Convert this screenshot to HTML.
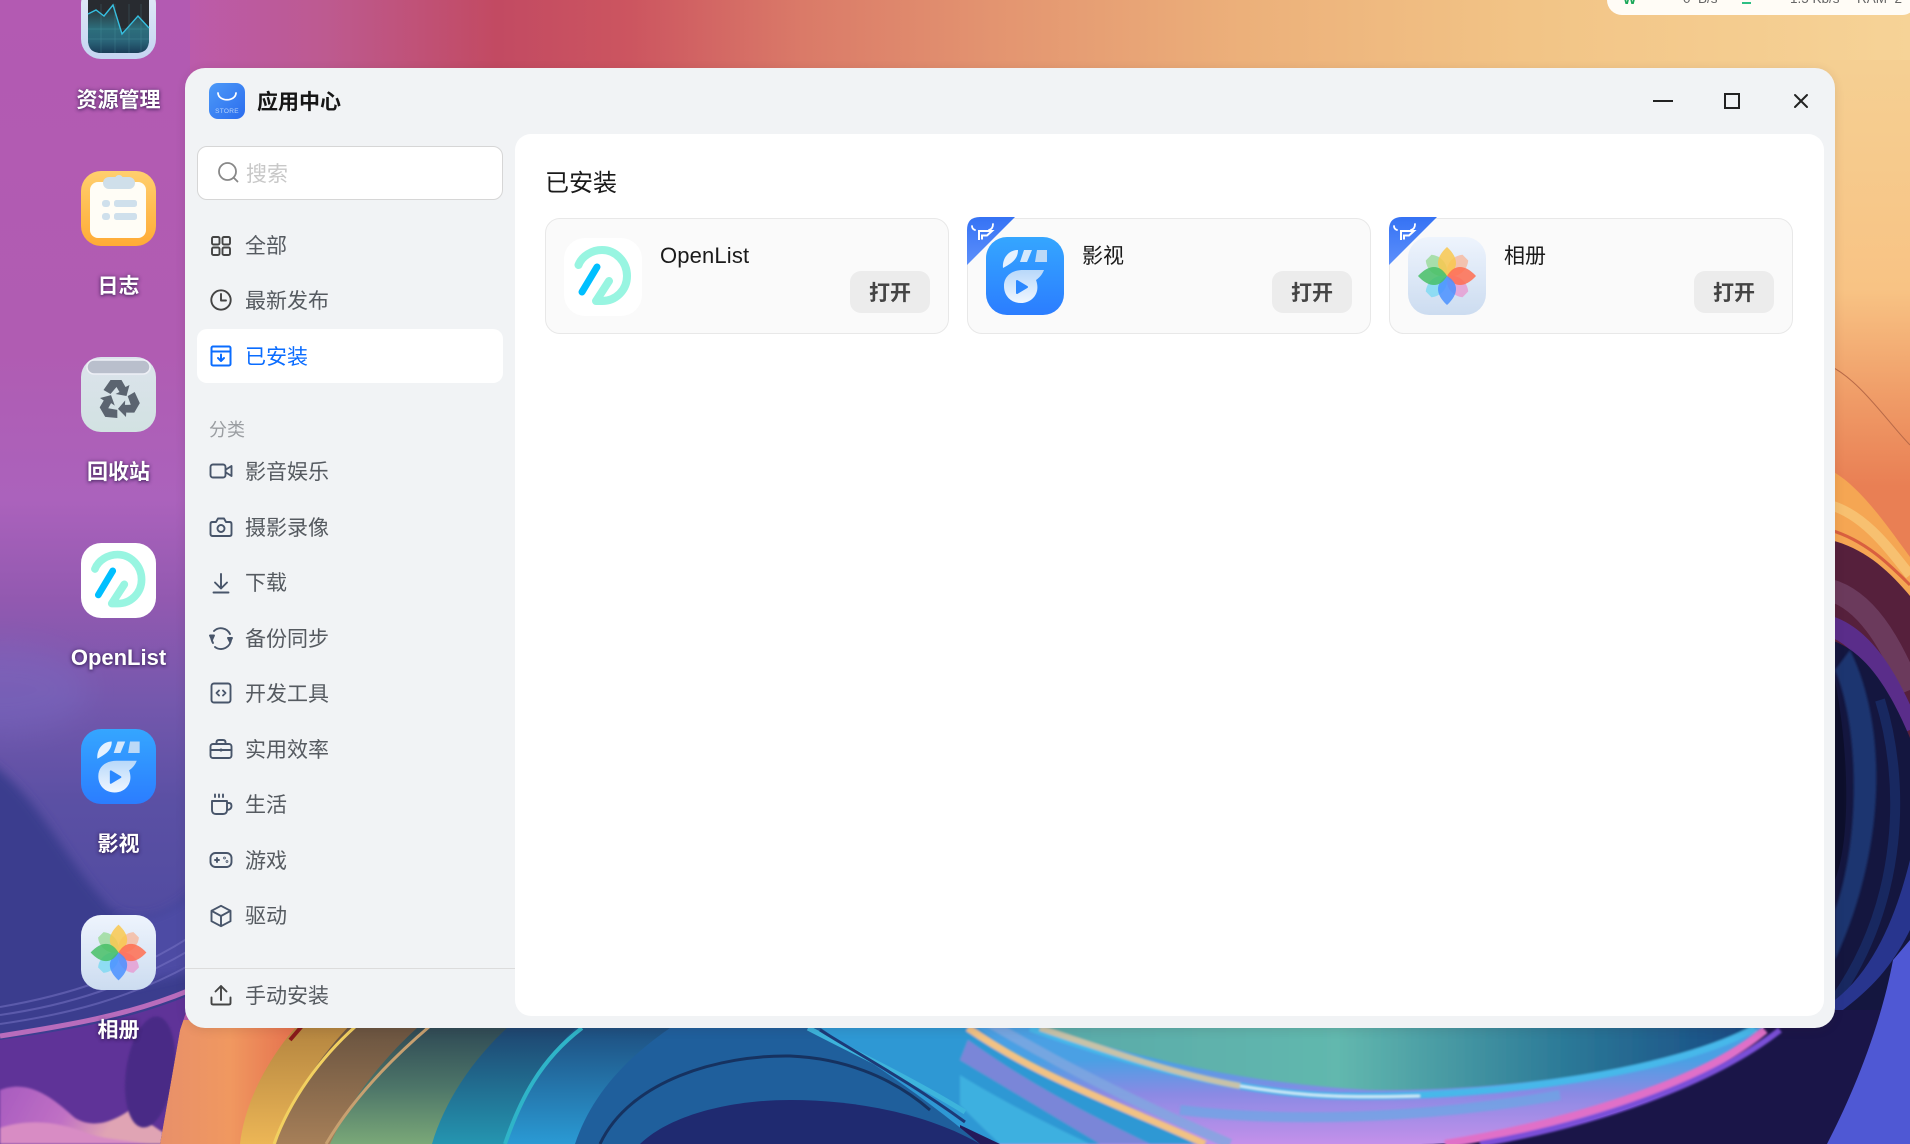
<!DOCTYPE html>
<html lang="zh">
<head>
<meta charset="utf-8">
<title>应用中心</title>
<style>
html,body{margin:0;padding:0;width:1910px;height:1144px;overflow:hidden;background:#1e1f60}
body{position:relative;font-family:"Liberation Sans","Noto Sans CJK SC",sans-serif}
.abs,.m,.lbl,.ic,.card,.btn,.name{position:absolute}
svg{display:block;overflow:visible}
.lbl{left:18px;width:201px;text-align:center;font-size:21px;font-weight:700;color:#fff;height:30px;line-height:30px;text-shadow:0 1px 3px rgba(40,20,70,.75),0 0 5px rgba(40,20,70,.35);white-space:nowrap}
.ic{left:81px;width:75px;height:75px}
#win{position:absolute;left:185px;top:68px;width:1650px;height:960px;background:#f1f3f5;border-radius:20px;box-shadow:0 2px 10px rgba(60,30,30,.12)}
#panel{position:absolute;left:515px;top:134px;width:1309px;height:882px;background:#fff;border-radius:16px}
.m{left:245px;height:30px;line-height:30px;font-size:21px;color:#555a60;white-space:nowrap}
.si{position:absolute;left:209px;width:24px;height:24px}
.si *{fill:none;stroke:#48556a;stroke-width:1.9;stroke-linecap:round;stroke-linejoin:round}
.card{top:218px;width:404px;height:116px;box-sizing:border-box;background:#fafafa;border:1px solid #e8e8e8;border-radius:15px}
.name{height:30px;line-height:30px;top:242px;font-size:21px;color:#1a1a1a;white-space:nowrap}
.btn{top:271px;width:80px;height:42px;border-radius:11px;background:#ececec;color:#444;font-weight:700;font-size:21px;line-height:45px;text-align:center}
.st{position:absolute;font-size:13.5px;line-height:16px;color:#666;white-space:nowrap}
</style>
</head>
<body>
<!-- wallpaper -->
<svg class="abs" style="left:0;top:0" width="1910" height="1144" viewBox="0 0 1910 1144">
<defs>
<linearGradient id="top" gradientUnits="userSpaceOnUse" x1="0" y1="0" x2="1910" y2="0">
<stop offset="0" stop-color="#b25ab2"/><stop offset=".09" stop-color="#bb5bae"/><stop offset=".17" stop-color="#bd5a90"/><stop offset=".26" stop-color="#c24a62"/><stop offset=".33" stop-color="#cc5560"/><stop offset=".42" stop-color="#da7a68"/><stop offset=".52" stop-color="#e39470"/><stop offset=".65" stop-color="#ecb07a"/><stop offset=".8" stop-color="#f2c486"/><stop offset="1" stop-color="#f6d397"/>
</linearGradient>
<linearGradient id="leftc" gradientUnits="userSpaceOnUse" x1="0" y1="0" x2="0" y2="1000">
<stop offset="0" stop-color="#b35ab2"/><stop offset=".35" stop-color="#b05cb2"/><stop offset=".5" stop-color="#ab62bc"/><stop offset=".6" stop-color="#9259b0"/><stop offset=".7" stop-color="#7558ad"/><stop offset=".8" stop-color="#5b50a4"/><stop offset="1" stop-color="#4a489e"/>
</linearGradient>
<linearGradient id="rstrip" gradientUnits="userSpaceOnUse" x1="0" y1="68" x2="0" y2="560">
<stop offset="0" stop-color="#f5cf92"/><stop offset=".45" stop-color="#f8c384"/><stop offset=".68" stop-color="#ef9a66"/><stop offset=".85" stop-color="#e97f54"/><stop offset="1" stop-color="#e97f54"/>
</linearGradient>
<linearGradient id="gLow" gradientUnits="userSpaceOnUse" x1="0" y1="1028" x2="0" y2="1144">
<stop offset="0" stop-color="#2f4a55"/><stop offset=".5" stop-color="#4c7468"/><stop offset="1" stop-color="#7aa878"/>
</linearGradient>
<linearGradient id="tan" gradientUnits="userSpaceOnUse" x1="0" y1="1028" x2="0" y2="1144">
<stop offset="0" stop-color="#6a5440"/><stop offset="1" stop-color="#a67f58"/>
</linearGradient>
<linearGradient id="gold" gradientUnits="userSpaceOnUse" x1="0" y1="1028" x2="0" y2="1144">
<stop offset="0" stop-color="#b48540"/><stop offset="1" stop-color="#ecb656"/>
</linearGradient>
<linearGradient id="blueB" gradientUnits="userSpaceOnUse" x1="0" y1="1028" x2="0" y2="1144">
<stop offset="0" stop-color="#1e4f80"/><stop offset="1" stop-color="#2a9ad4"/>
</linearGradient>
<linearGradient id="tealB" gradientUnits="userSpaceOnUse" x1="0" y1="1028" x2="0" y2="1144">
<stop offset="0" stop-color="#1e4570"/><stop offset="1" stop-color="#2495b0"/>
</linearGradient>
<linearGradient id="midT" gradientUnits="userSpaceOnUse" x1="1000" y1="0" x2="1750" y2="0">
<stop offset="0" stop-color="#58a8a8"/><stop offset=".45" stop-color="#62b8ae"/><stop offset=".75" stop-color="#2c7a98"/><stop offset="1" stop-color="#184a84"/>
</linearGradient>
<linearGradient id="lav" gradientUnits="userSpaceOnUse" x1="0" y1="1060" x2="0" y2="1144">
<stop offset="0" stop-color="#4aa0e4"/><stop offset=".4" stop-color="#8a8ae4"/><stop offset="1" stop-color="#c490ea"/>
</linearGradient>
<linearGradient id="ora" gradientUnits="userSpaceOnUse" x1="160" y1="0" x2="300" y2="0">
<stop offset="0" stop-color="#e8906a"/><stop offset=".5" stop-color="#f09860"/><stop offset="1" stop-color="#e56f4d"/>
</linearGradient>
<linearGradient id="pinkb" gradientUnits="userSpaceOnUse" x1="0" y1="1090" x2="100" y2="1144">
<stop offset="0" stop-color="#a85cc0"/><stop offset=".6" stop-color="#c070c4"/><stop offset="1" stop-color="#e0a4b4"/>
</linearGradient>
<filter id="b15" x="-50%" y="-50%" width="200%" height="200%"><feGaussianBlur stdDeviation="15"/></filter>
<filter id="b5" x="-20%" y="-20%" width="140%" height="140%"><feGaussianBlur stdDeviation="5"/></filter>
<filter id="b1" x="-20%" y="-20%" width="140%" height="140%"><feGaussianBlur stdDeviation="1"/></filter>
<clipPath id="lclip"><path d="M0,0 H190 V1000 L180,1030 L160,1144 H0Z"/></clipPath>
</defs>
<rect width="1910" height="1144" fill="url(#top)"/>

<!-- bottom band, painted right to left -->
<rect x="400" y="1020" width="1510" height="124" fill="#1a1548"/>
<path d="M960,1020 L1770,1020 C1720,1090 1560,1144 1420,1144 L960,1144Z" fill="url(#lav)"/>
<g filter="url(#b1)">
<path d="M1445,1144 C1560,1125 1700,1085 1765,1030" fill="none" stroke="#e070c8" stroke-width="8"/>
<path d="M1480,1144 C1590,1125 1710,1085 1780,1030" fill="none" stroke="#7a50d8" stroke-width="6"/>
<path d="M1010,1020 L1770,1020 C1690,1065 1520,1092 1370,1090 C1220,1082 1120,1050 1010,1020Z" fill="url(#midT)"/>
<path d="M1030,1028 C1120,1060 1240,1096 1350,1096 C1500,1098 1680,1070 1755,1028" fill="none" stroke="#46b8ea" stroke-width="7"/>
<path d="M1040,1028 C1120,1055 1180,1075 1240,1086" fill="none" stroke="#c8c2a8" stroke-width="6"/>
<path d="M1240,1086 C1300,1096 1340,1098 1420,1096" fill="none" stroke="#d8eef8" stroke-width="2.5"/>
<path d="M1180,1110 C1280,1122 1420,1120 1560,1095" fill="none" stroke="#6aa8e4" stroke-width="10" opacity=".7"/>
<!-- left of orange band -->
<path d="M780,1020 L968,1020 C1040,1078 1120,1105 1208,1144 L780,1144Z" fill="#2f98d4"/>
<path d="M968,1040 C1030,1085 1090,1115 1150,1144 L1100,1144 C1060,1120 1010,1090 960,1060Z" fill="#7a86d8"/>
<path d="M960,1075 C1000,1100 1050,1125 1090,1144 L1000,1144 C985,1130 970,1115 960,1105Z" fill="#3cb0e0"/>
<path d="M968,1028 C1040,1078 1120,1105 1205,1144" fill="none" stroke="#f2c284" stroke-width="7"/>
<path d="M985,1020 C1060,1065 1130,1100 1230,1144" fill="none" stroke="#7fa8e0" stroke-width="10" opacity=".8"/>
</g>
<path d="M960,1125 L1000,1144 L960,1144Z" fill="#241a5a"/>
<path d="M500,1020 L810,1020 C850,1050 910,1085 980,1144 L500,1144Z" fill="#1f5f9c"/>
<path d="M808,1028 C850,1050 910,1078 965,1112" fill="none" stroke="#3db4dc" stroke-width="5"/>
<path d="M820,1030 C860,1055 910,1082 965,1122" fill="none" stroke="#1c3a78" stroke-width="3"/>
<path d="M640,1144 C670,1115 730,1100 790,1100 C860,1100 930,1115 980,1144Z" fill="#1f2a70"/>
<path d="M600,1144 C630,1080 720,1055 790,1056 C840,1058 890,1075 930,1110" fill="none" stroke="#163260" stroke-width="3"/>
<path d="M0,1020 L682,1020 C620,1060 590,1100 575,1144 L0,1144Z" fill="url(#blueB)"/>
<path d="M0,1020 L584,1020 C540,1060 520,1100 507,1144 L0,1144Z" fill="url(#tealB)"/>
<path d="M582,1028 C540,1060 520,1100 505,1144" fill="none" stroke="#2fb4c8" stroke-width="4"/>
<path d="M0,1020 L516,1020 C475,1055 445,1100 432,1144 L0,1144Z" fill="url(#gLow)"/>
<path d="M0,1020 L426,1020 C385,1055 350,1100 330,1144 L0,1144Z" fill="url(#tan)"/>
<path d="M430,1026 C390,1060 352,1100 326,1144" fill="none" stroke="#c8a070" stroke-width="3"/>
<path d="M0,1020 L355,1020 C320,1055 290,1100 276,1144 L0,1144Z" fill="url(#gold)"/>
<path d="M356,1026 C320,1058 290,1100 274,1144" fill="none" stroke="#f2d060" stroke-width="3"/>
<path d="M150,1020 L302,1020 C270,1055 245,1100 240,1144 L150,1144Z" fill="url(#ora)"/>
<path d="M302,1026 L290,1040" fill="none" stroke="#8a1a1a" stroke-width="4"/>

<!-- left column -->
<g clip-path="url(#lclip)">
<rect x="0" y="0" width="190" height="1144" fill="url(#leftc)"/>
<ellipse cx="0" cy="690" rx="90" ry="45" fill="#7a72cc" opacity=".3" filter="url(#b15)"/>
<path d="M-20,755 C40,795 60,855 112,910 C140,925 170,920 200,885 L200,1010 L-20,1050Z" fill="#3b3c8e" filter="url(#b5)"/>
<path d="M118,915 C140,922 170,915 200,885 L200,970 L130,985Z" fill="#4d4ba4" filter="url(#b5)"/>
<path d="M0,1040 C70,1030 130,1020 190,995 L190,1144 L0,1144Z" fill="#5f3398"/>
<path d="M0,1007 C70,995 130,975 190,937 M0,1015 C70,1005 130,985 190,950 M0,1024 C70,1014 130,998 190,965" fill="none" stroke="#7c78c8" stroke-width="2" opacity=".5"/>
<path d="M0,1036 C70,1025 130,1015 190,990" fill="none" stroke="#b86cbc" stroke-width="5"/>
<g filter="url(#b1)">
<path d="M0,1090 C30,1078 55,1100 75,1118 C95,1130 115,1120 130,1110 L180,1144 L0,1144Z" fill="url(#pinkb)"/>
<path d="M0,1128 C30,1118 60,1122 90,1134 C100,1138 130,1141 150,1144 L0,1144Z" fill="#d88cc4"/>
</g>
<ellipse cx="150" cy="1072" rx="24" ry="56" fill="#4a2a86" transform="rotate(8 150 1072)" filter="url(#b1)"/>
</g>

<!-- right strip -->
<rect x="1830" y="60" width="80" height="560" fill="url(#rstrip)"/>
<path d="M1830,366 C1860,380 1890,425 1910,445" fill="none" stroke="#b86a48" stroke-width="1"/>
<path d="M1830,470 C1860,485 1890,530 1910,557 L1910,740 L1830,740Z" fill="#f5a653"/>
<path d="M1830,505 C1865,515 1890,550 1910,575" fill="none" stroke="#f7c070" stroke-width="10"/>
<path d="M1830,530 C1865,540 1890,565 1910,585" fill="none" stroke="#d9603f" stroke-width="3"/>
<path d="M1830,540 C1865,548 1890,572 1910,596 L1910,780 L1830,780Z" fill="#56203c"/>
<path d="M1830,590 C1865,600 1890,640 1910,690" fill="none" stroke="#6b3a5c" stroke-width="22"/>
<path d="M1830,626 C1865,638 1890,680 1910,730" fill="none" stroke="#5a2d8a" stroke-width="20"/>
<path d="M1830,640 C1865,650 1890,690 1910,738 L1910,1144 L1830,1144Z" fill="#14163f"/>
<path d="M1850,650 C1885,720 1890,840 1835,960 L1835,910 C1860,840 1860,730 1835,670Z" fill="#1b3570" filter="url(#b1)"/>
<path d="M1835,680 C1850,760 1850,840 1835,880Z" fill="#0d0f2c"/>
<path d="M1880,700 C1905,780 1905,900 1835,1000" fill="none" stroke="#182860" stroke-width="10"/>
<path d="M1835,1000 C1880,965 1900,900 1910,860 L1910,930 C1890,970 1870,990 1835,1016Z" fill="#28358e"/>
<rect x="1830" y="1010" width="80" height="134" fill="#1a1548"/>
<path d="M1893,960 L1910,940 L1910,1144 L1827,1144 C1850,1100 1880,1030 1893,960Z" fill="#4f58d4"/>
</svg>

<!-- status pill -->
<div class="abs" style="left:1607px;top:-20px;width:310px;height:35px;background:#fffcf6;border-radius:15px;overflow:hidden">
 <div class="st" style="left:16px;top:11px;color:#1aa85a;font-weight:700;font-size:14px">W</div>
 <div class="st" style="left:76px;top:11px">0&nbsp; B/s</div>
 <div class="abs" style="left:135px;top:22px;width:9px;height:2px;background:#2dbf84"></div>
 <div class="st" style="left:183px;top:11px">1.5 Kb/s</div>
 <div class="st" style="left:250px;top:11px">RAM&nbsp; 2</div>
</div>

<!-- desktop icons -->
<svg class="ic" style="top:-16px" viewBox="0 0 75 75">
<defs><linearGradient id="scr" x1="0" y1="0" x2="0" y2="1"><stop offset="0" stop-color="#2a2c30"/><stop offset=".5" stop-color="#2c6e7c"/><stop offset=".75" stop-color="#2a6478"/><stop offset="1" stop-color="#1a3d58"/></linearGradient>
<linearGradient id="frm" x1="0" y1="0" x2="0" y2="1"><stop offset="0" stop-color="#e4ecf7"/><stop offset="1" stop-color="#c5d4f2"/></linearGradient></defs>
<rect width="75" height="75" rx="20" fill="url(#frm)"/>
<rect x="7" y="0" width="61" height="69" rx="13" fill="#282b30"/>
<path d="M7,30 L15,26 L23,32 L32,21 L41,50 L57,32 L68,44 L68,56 Q68,69 55,69 L20,69 Q7,69 7,56Z" fill="url(#scr)"/>
<path d="M7,30 L15,26 L23,32 L32,21 L41,50 L57,32 L68,44" fill="none" stroke="#36bfe0" stroke-width="1.4"/>
<path d="M7,45 H68 M7,55 H68 M20,20 V69 M34,20 V69 M48,20 V69 M60,20 V69" stroke="#60b0b8" stroke-width=".5" opacity=".4"/>
</svg>
<div class="lbl" style="top:86px">资源管理</div>

<svg class="ic" style="top:171px" viewBox="0 0 75 75">
<defs><linearGradient id="nt" x1="0" y1="0" x2="0" y2="1"><stop offset="0" stop-color="#ffcf6e"/><stop offset="1" stop-color="#ffab35"/></linearGradient></defs>
<rect width="75" height="75" rx="20" fill="url(#nt)"/>
<rect x="9" y="11" width="56" height="56" rx="8" fill="#fffdf6"/>
<rect x="22" y="6" width="32" height="12" rx="6" fill="#cfdfea"/><circle cx="38" cy="8" r="4" fill="#cfdfea"/>
<rect x="21" y="29" width="8" height="7" rx="3" fill="#cfe0ec"/><rect x="33" y="29" width="23" height="7" rx="2.5" fill="#cfe0ec"/>
<rect x="21" y="42" width="8" height="7" rx="3" fill="#cfe0ec"/><rect x="33" y="42" width="23" height="7" rx="2.5" fill="#cfe0ec"/>
</svg>
<div class="lbl" style="top:272px">日志</div>

<svg class="ic" style="top:357px" viewBox="0 0 75 75">
<defs><linearGradient id="bin" x1="0" y1="0" x2="0" y2="1"><stop offset="0" stop-color="#dce3ec"/><stop offset="1" stop-color="#d2e2e2"/></linearGradient></defs>
<rect width="75" height="75" rx="20" fill="url(#bin)"/>
<rect x="6" y="3" width="63" height="14" rx="7" fill="#b9bfcc" stroke="#eef0f6" stroke-width="1.5"/>
<g fill="#5b6470" transform="translate(37.5,43)">
<path d="M-8,-6 L-15,-10 L-8,-20 L3,-20 L7,-13 L11,-15 L8,-4 L-3,-6 L1,-8 L-2,-13 Z"/>
<path d="M-8,-6 L-15,-10 L-8,-20 L3,-20 L7,-13 L11,-15 L8,-4 L-3,-6 L1,-8 L-2,-13 Z" transform="rotate(120)"/>
<path d="M-8,-6 L-15,-10 L-8,-20 L3,-20 L7,-13 L11,-15 L8,-4 L-3,-6 L1,-8 L-2,-13 Z" transform="rotate(240)"/>
</g>
</svg>
<div class="lbl" style="top:458px">回收站</div>

<svg class="ic" style="top:543px" viewBox="0 0 78 78"><rect width="78" height="78" rx="21" fill="#fff"/>
<path d="M14.5,27 C18,18 28,12 38,12 C52,12 63,24 63,38 C63,52 52,63 38,63 L32,63 L45,43" fill="none" stroke="#98f5e1" stroke-width="8" stroke-linecap="round" stroke-linejoin="round"/>
<path d="M33,29 L18,54" fill="none" stroke="#00bfff" stroke-width="7" stroke-linecap="round"/></svg>
<div class="lbl" style="top:643px;font-size:22px">OpenList</div>

<svg class="ic" style="top:729px" viewBox="0 0 78 78">
<defs><linearGradient id="vb" x1="0" y1="0" x2="0" y2="1"><stop offset="0" stop-color="#35a6ff"/><stop offset="1" stop-color="#2b7dff"/></linearGradient>
<linearGradient id="vw" x1="0" y1="0" x2="0" y2="1"><stop offset="0" stop-color="#b8d8fa"/><stop offset="1" stop-color="#f0f7ff"/></linearGradient></defs>
<rect width="78" height="78" rx="21" fill="url(#vb)"/>
<path d="M17,31 C16,22 22,13 32,13 C32,22 26,26 17,31Z" fill="#e6f2ff"/><path d="M38,13 L46,13 L41,25 L34,25Z" fill="#d4e8fc"/><path d="M51,13 L61,13 L61,25 L49,25Z" fill="#bcd9f7"/>
<path d="M18,49 C18,39 26,33 37,33 L58,33 C56,38 53,41 50,43 C55,56 46,66 35,66 C25,66 18,59 18,49Z" fill="url(#vw)"/><path d="M31,44 L41,50 L31,56Z" fill="#2b88ff" stroke="#2b88ff" stroke-width="2" stroke-linejoin="round"/></svg>
<div class="lbl" style="top:830px">影视</div>

<svg class="ic" style="top:915px" viewBox="0 0 78 78">
<defs><linearGradient id="fb" x1="0" y1="0" x2="0" y2="1"><stop offset="0" stop-color="#eef4fd"/><stop offset="1" stop-color="#ccdcf0"/></linearGradient></defs>
<rect width="78" height="78" rx="21" fill="url(#fb)"/>
<g transform="translate(39,39)">
<g fill-opacity=".7"><path d="M0,0 C-10,-7 -10,-19 -4,-26 L4,-26 C10,-19 10,-7 0,0Z" fill="#8fd88a" transform="rotate(-45)"/><path d="M0,0 C-10,-7 -10,-19 -4,-26 L4,-26 C10,-19 10,-7 0,0Z" fill="#f9b090" transform="rotate(45)"/><path d="M0,0 C-10,-7 -10,-19 -4,-26 L4,-26 C10,-19 10,-7 0,0Z" fill="#ea90cc" transform="rotate(135)"/><path d="M0,0 C-10,-7 -10,-19 -4,-26 L4,-26 C10,-19 10,-7 0,0Z" fill="#6fd8f2" transform="rotate(225)"/></g>
<g fill-opacity=".85"><path d="M0,0 C-12,-7 -12,-18 0,-29 C12,-18 12,-7 0,0Z" fill="#f9c84f"/><path d="M0,0 C-12,-7 -12,-18 0,-29 C12,-18 12,-7 0,0Z" fill="#ff6d50" transform="rotate(90)"/><path d="M0,0 C-12,-7 -12,-18 0,-29 C12,-18 12,-7 0,0Z" fill="#4a90ff" transform="rotate(180)"/><path d="M0,0 C-12,-7 -12,-18 0,-29 C12,-18 12,-7 0,0Z" fill="#48c066" transform="rotate(270)"/></g>
</g></svg>
<div class="lbl" style="top:1016px">相册</div>

<!-- window -->
<div id="win"></div>
<div id="panel"></div>

<svg class="abs" style="left:209px;top:83px" width="36" height="36" viewBox="0 0 36 36">
<defs><linearGradient id="st" x1="0" y1="0" x2="1" y2="1"><stop offset="0" stop-color="#4d9af8"/><stop offset="1" stop-color="#2b6cee"/></linearGradient></defs>
<rect width="36" height="36" rx="9" fill="url(#st)"/>
<path d="M9,10 C9.5,19 26.5,19 27,10" fill="none" stroke="#fff" stroke-width="1.8" stroke-linecap="round"/>
<text x="18" y="30" text-anchor="middle" font-size="6.5" fill="#b8d4fb" font-family="Liberation Sans" letter-spacing=".3">STORE</text>
</svg>
<div class="abs" style="left:257px;top:87px;height:32px;line-height:32px;font-size:21px;font-weight:700;color:#161616;white-space:nowrap">应用中心</div>

<svg class="abs" style="left:1640px;top:80px" width="190" height="40" viewBox="0 0 190 40">
<path d="M13,21 H33" stroke="#222" stroke-width="2"/>
<rect x="85" y="14" width="14" height="14" fill="none" stroke="#222" stroke-width="2"/>
<path d="M155,15 L167,27 M167,15 L155,27" stroke="#222" stroke-width="2" stroke-linecap="round"/>
</svg>

<!-- search -->
<div class="abs" style="left:197px;top:146px;width:306px;height:54px;box-sizing:border-box;background:#fff;border:1px solid #d6d6d6;border-radius:10px"></div>
<svg class="abs" style="left:216px;top:160px" width="24" height="24" viewBox="0 0 24 24"><circle cx="11.5" cy="11.5" r="8.5" fill="none" stroke="#888" stroke-width="1.8"/><path d="M18,18 L21.5,21.5" stroke="#888" stroke-width="1.8" stroke-linecap="round"/></svg>
<div class="m" style="left:246px;top:160px;color:#c8c8c8">搜索</div>

<!-- active item -->
<div class="abs" style="left:197px;top:329px;width:306px;height:54px;background:#fff;border-radius:10px"></div>

<svg class="si" style="top:234px" viewBox="0 0 24 24"><rect x="3" y="3" width="7.5" height="7.5" rx="1.5" style="stroke:#444"/><rect x="13.5" y="3" width="7.5" height="7.5" rx="1.5" style="stroke:#444"/><rect x="3" y="13.5" width="7.5" height="7.5" rx="1.5" style="stroke:#444"/><rect x="13.5" y="13.5" width="7.5" height="7.5" rx="1.5" style="stroke:#444"/></svg>
<div class="m" style="top:232px">全部</div>
<svg class="si" style="top:288px" viewBox="0 0 24 24"><circle cx="12" cy="12" r="9.7" style="stroke:#444"/><path d="M12,6 V12.5 H17" style="stroke:#444"/></svg>
<div class="m" style="top:287px">最新发布</div>
<svg class="si" style="top:344px" viewBox="0 0 24 24"><rect x="2.5" y="2.5" width="19" height="19" rx="1.5" style="stroke:#0a6cff;stroke-width:2"/><path d="M2.5,7.5 H21.5" style="stroke:#0a6cff;stroke-width:2"/><path d="M12,10.5 V16.5 M9,14 L12,17 L15,14" style="stroke:#0a6cff;stroke-width:2"/></svg>
<div class="m" style="top:343px;color:#0a6cff">已安装</div>

<div class="m" style="left:209px;top:415px;font-size:18px;color:#9a9da1">分类</div>

<svg class="si" style="top:459px" viewBox="0 0 24 24"><rect x="1.5" y="5.5" width="15" height="13" rx="2.5"/><path d="M17,10.5 L22.5,7 V17 L17,13.5"/></svg>
<div class="m" style="top:458px">影音娱乐</div>
<svg class="si" style="top:515px" viewBox="0 0 24 24"><path d="M3.5,7 H7 L9,3.5 H15 L17,7 H20.5 Q22.5,7 22.5,9 V19 Q22.5,21 20.5,21 H3.5 Q1.5,21 1.5,19 V9 Q1.5,7 3.5,7Z"/><circle cx="12" cy="13.5" r="3.5"/></svg>
<div class="m" style="top:514px">摄影录像</div>
<svg class="si" style="top:571px" viewBox="0 0 24 24"><path d="M12,3 V17 M6,11.5 L12,17.5 L18,11.5 M4.5,21.5 H19.5"/></svg>
<div class="m" style="top:569px">下载</div>
<svg class="si" style="top:626px" viewBox="0 0 24 24"><path d="M5,5 A10,10 0 0 1 21,8 M22,13 A10,10 0 0 1 6,21 M2.5,11 A10,10 0 0 0 4,17"/><path d="M1,9.5 L5,9.5 L3,14Z M19,12 L23,12 L21,16Z" style="fill:#48556a"/></svg>
<div class="m" style="top:625px">备份同步</div>
<svg class="si" style="top:681px" viewBox="0 0 24 24"><rect x="2.5" y="2.5" width="19" height="19" rx="2.5"/><path d="M10,9.5 L7.5,12 L10,14.5 M14,9.5 L16.5,12 L14,14.5"/></svg>
<div class="m" style="top:680px">开发工具</div>
<svg class="si" style="top:737px" viewBox="0 0 24 24"><rect x="1.5" y="7" width="21" height="14" rx="2.5"/><path d="M7.5,7 V5.5 Q7.5,3 10,3 H14 Q16.5,3 16.5,5.5 V7 M1.5,13 H22.5"/><circle cx="12" cy="13" r=".6"/></svg>
<div class="m" style="top:736px">实用效率</div>
<svg class="si" style="top:792px" viewBox="0 0 24 24"><path d="M3,9 H18 V18 Q18,22 14,22 H7 Q3,22 3,18Z M18,11 H20 Q22.5,11 22.5,14 Q22.5,17.5 18,18"/><path d="M6,2.5 V5 M10,2.5 V5 M14,2.5 V5"/></svg>
<div class="m" style="top:791px">生活</div>
<svg class="si" style="top:848px" viewBox="0 0 24 24"><rect x="1.5" y="5" width="21" height="14" rx="5"/><path d="M6,12 H10 M8,10 V14"/><circle cx="15.5" cy="10" r=".4"/><circle cx="18" cy="13.5" r=".4"/></svg>
<div class="m" style="top:847px">游戏</div>
<svg class="si" style="top:904px" viewBox="0 0 24 24"><path d="M12,1.8 L21.5,6.8 V17.2 L12,22.2 L2.5,17.2 V6.8Z M2.5,6.8 L12,12 L21.5,6.8 M12,12 V22"/></svg>
<div class="m" style="top:902px">驱动</div>

<div class="abs" style="left:185px;top:968px;width:330px;height:1px;background:#dcdcdc"></div>
<svg class="si" style="top:983px" viewBox="0 0 24 24"><path d="M12,17 V3 M6.5,8.5 L12,3 L17.5,8.5 M2.5,14.5 V20 Q2.5,21.5 4,21.5 H20 Q21.5,21.5 21.5,20 V14.5" style="stroke:#444"/></svg>
<div class="m" style="top:982px">手动安装</div>

<!-- content -->
<div class="abs" style="left:545px;top:166px;height:36px;line-height:36px;font-size:24px;color:#1a1a1a;white-space:nowrap">已安装</div>

<div class="card" style="left:545px"></div>
<div class="card" style="left:967px"></div>
<div class="card" style="left:1389px"></div>

<svg class="abs" style="left:564px;top:238px" width="78" height="78" viewBox="0 0 78 78"><rect width="78" height="78" rx="21" fill="#fff"/>
<path d="M14.5,27 C18,18 28,12 38,12 C52,12 63,24 63,38 C63,52 52,63 38,63 L32,63 L45,43" fill="none" stroke="#98f5e1" stroke-width="8" stroke-linecap="round" stroke-linejoin="round"/>
<path d="M33,29 L18,54" fill="none" stroke="#00bfff" stroke-width="7" stroke-linecap="round"/></svg>
<svg class="abs" style="left:986px;top:237px" width="78" height="78" viewBox="0 0 78 78"><rect width="78" height="78" rx="21" fill="url(#vb)"/>
<path d="M17,31 C16,22 22,13 32,13 C32,22 26,26 17,31Z" fill="#e6f2ff"/><path d="M38,13 L46,13 L41,25 L34,25Z" fill="#d4e8fc"/><path d="M51,13 L61,13 L61,25 L49,25Z" fill="#bcd9f7"/>
<path d="M18,49 C18,39 26,33 37,33 L58,33 C56,38 53,41 50,43 C55,56 46,66 35,66 C25,66 18,59 18,49Z" fill="url(#vw)"/><path d="M31,44 L41,50 L31,56Z" fill="#2b88ff" stroke="#2b88ff" stroke-width="2" stroke-linejoin="round"/></svg>
<svg class="abs" style="left:1408px;top:237px" width="78" height="78" viewBox="0 0 78 78"><rect width="78" height="78" rx="21" fill="url(#fb)"/>
<g transform="translate(39,39)"><g fill-opacity=".7"><path d="M0,0 C-10,-7 -10,-19 -4,-26 L4,-26 C10,-19 10,-7 0,0Z" fill="#8fd88a" transform="rotate(-45)"/><path d="M0,0 C-10,-7 -10,-19 -4,-26 L4,-26 C10,-19 10,-7 0,0Z" fill="#f9b090" transform="rotate(45)"/><path d="M0,0 C-10,-7 -10,-19 -4,-26 L4,-26 C10,-19 10,-7 0,0Z" fill="#ea90cc" transform="rotate(135)"/><path d="M0,0 C-10,-7 -10,-19 -4,-26 L4,-26 C10,-19 10,-7 0,0Z" fill="#6fd8f2" transform="rotate(225)"/></g>
<g fill-opacity=".85"><path d="M0,0 C-12,-7 -12,-18 0,-29 C12,-18 12,-7 0,0Z" fill="#f9c84f"/><path d="M0,0 C-12,-7 -12,-18 0,-29 C12,-18 12,-7 0,0Z" fill="#ff6d50" transform="rotate(90)"/><path d="M0,0 C-12,-7 -12,-18 0,-29 C12,-18 12,-7 0,0Z" fill="#4a90ff" transform="rotate(180)"/><path d="M0,0 C-12,-7 -12,-18 0,-29 C12,-18 12,-7 0,0Z" fill="#48c066" transform="rotate(270)"/></g></g></svg>

<!-- ribbons -->
<svg class="abs" style="left:967px;top:217px" width="48" height="48" viewBox="0 0 48 48">
<defs><linearGradient id="rb" x1="0" y1="0" x2="0" y2="1"><stop offset="0" stop-color="#3572f4"/><stop offset="1" stop-color="#5d90fb"/></linearGradient></defs>
<path d="M0,48 L0,13 Q0,0 13,0 L48,0Z" fill="url(#rb)"/>
<path d="M5,9 Q5,12 8,13 M26,7 Q26,12 22,13" fill="none" stroke="#fff" stroke-width="1.8" stroke-linecap="round"/>
<path d="M12,23 V14 H25 L20,18.5 H15 V22.5" fill="none" stroke="#fff" stroke-width="2"/>
</svg>
<svg class="abs" style="left:1389px;top:217px" width="48" height="48" viewBox="0 0 48 48">
<path d="M0,48 L0,13 Q0,0 13,0 L48,0Z" fill="url(#rb)"/>
<path d="M5,9 Q5,12 8,13 M26,7 Q26,12 22,13" fill="none" stroke="#fff" stroke-width="1.8" stroke-linecap="round"/>
<path d="M12,23 V14 H25 L20,18.5 H15 V22.5" fill="none" stroke="#fff" stroke-width="2"/>
</svg>

<div class="name" style="left:660px;font-size:22px;letter-spacing:.15px;top:241px">OpenList</div>
<div class="name" style="left:1082px">影视</div>
<div class="name" style="left:1504px">相册</div>

<div class="btn" style="left:850px">打开</div>
<div class="btn" style="left:1272px">打开</div>
<div class="btn" style="left:1694px">打开</div>
</body>
</html>
